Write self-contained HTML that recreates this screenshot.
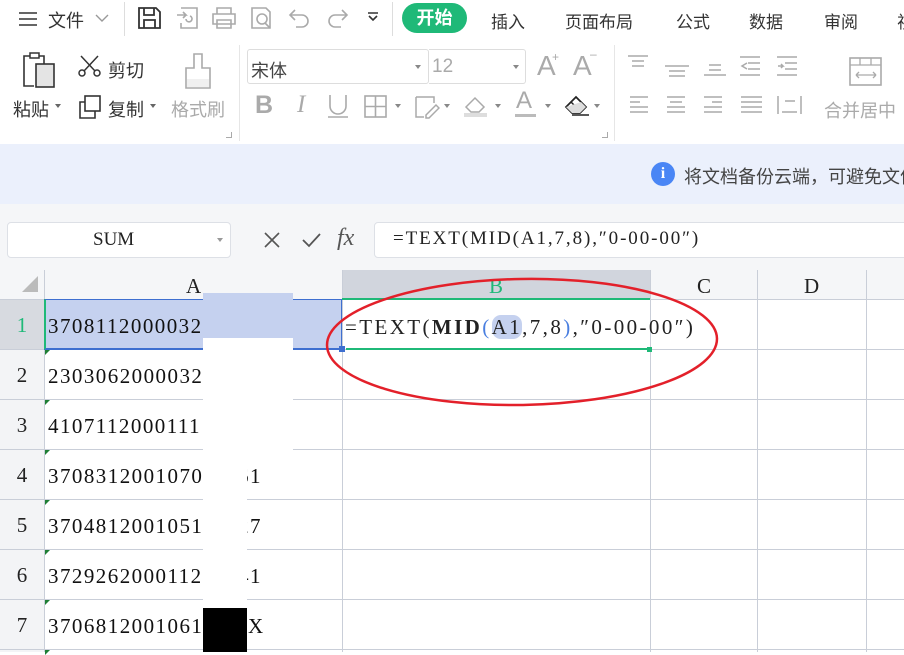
<!DOCTYPE html>
<html><head><meta charset="utf-8"><style>
*{margin:0;padding:0;box-sizing:border-box}
body{width:904px;height:652px;overflow:hidden;background:#fff;position:relative;font-family:"Liberation Sans","Noto Sans CJK SC",sans-serif;color:#222}
.a{position:absolute}
.t{font-size:17px;color:#333;white-space:nowrap}
.g{color:#aaa}
.serif{font-family:"Liberation Serif","Noto Serif CJK SC",serif}
.hl{position:absolute;left:0;width:904px;height:1px;background:#c9ced8}
.vl{position:absolute;top:270px;width:1px;height:382px;background:#c9ced8}
.cell{position:absolute;left:48px;font-family:"Liberation Serif",serif;font-size:21px;color:#111;letter-spacing:1.45px;white-space:nowrap}
.rn{position:absolute;left:0;width:44px;text-align:center;font-family:"Liberation Serif",serif;font-size:21px;color:#222}
.tri{position:absolute;left:45px;width:0;height:0;border-top:5px solid #1e7e34;border-right:5px solid transparent}
svg{position:absolute}
</style></head><body>
<!-- top bar -->
<svg style="left:18px;top:11px" width="22" height="16"><path d="M1 2h18M1 8h18M1 14h18" stroke="#333" stroke-width="1.6"/></svg>
<div class="a t" style="left:48px;top:7px;font-size:18px">文件</div>
<svg style="left:95px;top:14px" width="14" height="9"><path d="M1 1l6 6 6-6" stroke="#999" fill="none" stroke-width="1.4"/></svg>
<div class="a" style="left:124px;top:2px;width:1px;height:34px;background:#ddd"></div>
<svg style="left:137px;top:6px" width="26" height="24"><path d="M2 2h17l4 4v16H2z M7 2v7h10V2 M7 22v-8h11v8" stroke="#333" fill="none" stroke-width="1.8"/></svg>
<svg style="left:175px;top:6px" width="26" height="24"><path d="M6 2h16v20H6v-5 M2 9h9l-3-3m3 3l-3 3 M11 13a3 3 0 1 0 4 -3" stroke="#aaa" fill="none" stroke-width="1.6"/></svg>
<svg style="left:211px;top:6px" width="26" height="24"><path d="M6 8V2h14v6 M2 8h22v10H2z M6 14h14v8H6z" stroke="#aaa" fill="none" stroke-width="1.6"/></svg>
<svg style="left:250px;top:6px" width="26" height="24"><path d="M2 2h14l4 4v16H2z" stroke="#aaa" fill="none" stroke-width="1.6"/><circle cx="12" cy="13" r="5" stroke="#aaa" fill="none" stroke-width="1.6"/><path d="M15 17l5 5" stroke="#aaa" stroke-width="1.6"/></svg>
<svg style="left:286px;top:6px" width="26" height="24"><path d="M5 9h11a6 6 0 0 1 0 12h-6 M9 4L4 9l5 5" stroke="#aaa" fill="none" stroke-width="1.6"/></svg>
<svg style="left:325px;top:6px" width="26" height="24"><path d="M21 9H10a6 6 0 0 0 0 12h6 M17 4l5 5-5 5" stroke="#aaa" fill="none" stroke-width="1.6"/></svg>
<svg style="left:367px;top:12px" width="12" height="12"><path d="M1 1h10 M2 4l4 4 4-4" stroke="#333" fill="none" stroke-width="1.6"/></svg>
<div class="a" style="left:392px;top:2px;width:1px;height:34px;background:#ddd"></div>
<div class="a" style="left:402px;top:3px;width:65px;height:30px;background:#1fb978;border-radius:15px;color:#fff;font-size:18px;font-weight:bold;text-align:center;line-height:30px">开始</div>
<div class="a t" style="left:491px;top:8px">插入</div>
<div class="a t" style="left:565px;top:8px">页面布局</div>
<div class="a t" style="left:676px;top:8px">公式</div>
<div class="a t" style="left:749px;top:8px">数据</div>
<div class="a t" style="left:824px;top:8px">审阅</div>
<div class="a t" style="left:897px;top:8px">视</div>
<!-- ribbon -->
<svg style="left:21px;top:52px" width="36" height="38"><path d="M10 4h-7v30h10 M16 4h7v8" stroke="#333" fill="none" stroke-width="1.6"/><rect x="9" y="1" width="9" height="5" stroke="#333" fill="#fff" stroke-width="1.5"/><rect x="15" y="12" width="18" height="23" stroke="#333" fill="#e4e4e4" stroke-width="1.6"/></svg>
<div class="a t" style="left:13px;top:96px;font-size:18px">粘贴</div><div class="a" style="left:55px;top:104px;border:3px solid transparent;border-top:4px solid #666"></div>
<svg style="left:78px;top:54px" width="24" height="24"><circle cx="4" cy="19" r="3" stroke="#333" fill="none" stroke-width="1.5"/><circle cx="19" cy="19" r="3" stroke="#333" fill="none" stroke-width="1.5"/><path d="M6 17L20 2 M17 17L3 2" stroke="#333" stroke-width="1.5"/></svg>
<div class="a t" style="left:108px;top:57px;font-size:18px">剪切</div>
<svg style="left:78px;top:94px" width="24" height="26"><rect x="7" y="2" width="15" height="15" stroke="#333" fill="#fff" stroke-width="1.6"/><path d="M7 8H2v16h15v-7" stroke="#333" fill="none" stroke-width="1.6"/></svg>
<div class="a t" style="left:108px;top:96px;font-size:18px">复制</div><div class="a" style="left:150px;top:104px;border:3px solid transparent;border-top:4px solid #666"></div>
<svg style="left:183px;top:52px" width="30" height="38"><path d="M11 2h8v14h8v20H3V16h8z" stroke="#aaa" fill="none" stroke-width="1.6"/><rect x="4" y="27" width="22" height="8" fill="#f0f0f0"/></svg>
<div class="a t g" style="left:171px;top:96px;font-size:18px">格式刷</div>
<div class="a" style="left:226px;top:132px;width:6px;height:6px;border-right:1px solid #aaa;border-bottom:1px solid #aaa"></div>
<div class="a" style="left:239px;top:45px;width:1px;height:96px;background:#e6e6e6"></div>
<div class="a" style="left:247px;top:49px;width:182px;height:35px;border:1px solid #ddd;border-radius:3px"></div>
<div class="a t" style="left:251px;top:57px;color:#444;font-size:18px">宋体</div>
<div class="a" style="left:415px;top:65px;border:3px solid transparent;border-top:4px solid #888"></div>
<div class="a" style="left:429px;top:49px;width:97px;height:35px;border:1px solid #ddd;border-left:none;border-radius:0 3px 3px 0"></div>
<div class="a t g" style="left:432px;top:56px;font-size:19px">12</div>
<div class="a" style="left:513px;top:65px;border:3px solid transparent;border-top:4px solid #888"></div>
<div class="a g" style="left:537px;top:50px;font-size:28px;color:#aaa">A</div><div class="a" style="left:552px;top:50px;font-size:12px;color:#aaa">+</div>
<div class="a g" style="left:573px;top:50px;font-size:28px;color:#aaa">A</div><div class="a" style="left:590px;top:47px;font-size:12px;color:#aaa">–</div>
<div class="a" style="left:255px;top:91px;font-size:25px;font-weight:bold;color:#aaa">B</div>
<div class="a serif" style="left:297px;top:91px;font-size:25px;font-style:italic;color:#aaa">I</div>
<svg style="left:326px;top:94px" width="24" height="24"><path d="M4 1v11a8 8 0 0 0 16 0V1 M2 23h20" stroke="#aaa" fill="none" stroke-width="1.6"/></svg>
<svg style="left:364px;top:95px" width="24" height="24"><rect x="1" y="1" width="21" height="21" stroke="#aaa" fill="none" stroke-width="1.6"/><path d="M11.5 1v21M1 11.5h21" stroke="#aaa" stroke-width="1.6"/></svg>
<div class="a" style="left:395px;top:104px;border:3px solid transparent;border-top:4px solid #888"></div>
<svg style="left:414px;top:95px" width="26" height="24"><path d="M2 2h18v6 M2 2v20h8" stroke="#aaa" fill="none" stroke-width="1.5"/><path d="M12 20l10-10 3 3-10 10h-3z" stroke="#aaa" fill="none" stroke-width="1.5"/></svg>
<div class="a" style="left:444px;top:104px;border:3px solid transparent;border-top:4px solid #888"></div>
<svg style="left:463px;top:94px" width="26" height="24"><path d="M3 13l9-9 9 9-5 5H8z" stroke="#aaa" fill="none" stroke-width="1.5"/><rect x="1" y="19" width="23" height="4" fill="#ddd"/></svg>
<div class="a" style="left:495px;top:104px;border:3px solid transparent;border-top:4px solid #888"></div>
<div class="a" style="left:516px;top:87px;font-size:24px;color:#aaa">A</div><div class="a" style="left:515px;top:114px;width:21px;height:3px;background:#bbb"></div>
<div class="a" style="left:545px;top:104px;border:3px solid transparent;border-top:4px solid #888"></div>
<svg style="left:563px;top:93px" width="30" height="24"><path d="M3 14l10-10 10 10-6 6H9z" stroke="#222" fill="none" stroke-width="1.7"/><path d="M8 9l10 10" stroke="#222" stroke-width="1.5"/><path d="M3 14l6 6h8l6-6-5-5z" fill="#ddd"/><path d="M9 22h17" stroke="#222" stroke-width="1.5"/></svg>
<div class="a" style="left:594px;top:104px;border:3px solid transparent;border-top:4px solid #888"></div>
<div class="a" style="left:602px;top:132px;width:6px;height:6px;border-right:1px solid #aaa;border-bottom:1px solid #aaa"></div>
<div class="a" style="left:614px;top:45px;width:1px;height:96px;background:#e6e6e6"></div>
<svg style="left:626px;top:54px" width="180" height="62" stroke="#aaa" stroke-width="1.5" fill="none">
<path d="M2 2h20M6 7h12M6 12h12"/>
<path d="M39 12h24M43 17h16M43 22h16"/>
<path d="M78 21h22M83 16h12M83 11h12"/>
<path d="M114 3h20M122 9h12M122 15h12M114 21h20M121 9l-5 3 5 3"/>
<path d="M151 3h20M159 9h12M159 15h12M151 21h20M152 12h5l-2-2m2 2l-2 2"/>
<path d="M4 43h18M4 48h10M4 53h18M4 58h18"/>
<path d="M41 43h18M44 48h12M41 53h18M41 58h18"/>
<path d="M78 43h18M86 48h10M78 53h18M78 58h18"/>
<path d="M115 43h21M115 48h21M115 53h21M115 58h21"/>
<path d="M152 42v18M175 42v18M156 58h15M159 47h10"/>
</svg>
<svg style="left:849px;top:57px" width="34" height="30"><rect x="1" y="1" width="31" height="27" stroke="#aaa" fill="none" stroke-width="1.6"/><path d="M1 8h31M11 1v7M22 1v7M7 18h20M7 18l3-3m-3 3l3 3M27 18l-3-3m3 3l-3 3" stroke="#aaa" fill="none" stroke-width="1.3"/></svg>
<div class="a t g" style="left:824px;top:97px;color:#aaa;font-size:18px">合并居中</div>
<!-- notification band -->
<div class="a" style="left:0;top:144px;width:904px;height:60px;background:#ebf0fc"></div>
<div class="a" style="left:651px;top:162px;width:24px;height:24px;border-radius:50%;background:#4a86f5;color:#fff;font-size:16px;font-weight:bold;text-align:center;line-height:24px;font-family:'Liberation Serif',serif">i</div>
<div class="a t" style="left:684px;top:163px;color:#444;font-size:18px">将文档备份云端，可避免文件</div>
<!-- formula bar -->
<div class="a" style="left:0;top:204px;width:904px;height:66px;background:#f5f6f8"></div>
<div class="a" style="left:7px;top:222px;width:224px;height:36px;background:#fff;border:1px solid #dde0e6;border-radius:4px"></div>
<div class="a serif" style="left:93px;top:229px;font-size:19px">SUM</div>
<div class="a" style="left:217px;top:238px;border:3px solid transparent;border-top:4px solid #999"></div>
<svg style="left:263px;top:231px" width="18" height="18"><path d="M2 2l14 14M16 2L2 16" stroke="#555" stroke-width="1.6"/></svg>
<svg style="left:301px;top:232px" width="20" height="16"><path d="M2 8l6 6L19 2" stroke="#555" fill="none" stroke-width="1.8"/></svg>
<div class="a serif" style="left:337px;top:225px;font-size:24px;font-style:italic;color:#555">fx</div>
<div class="a" style="left:374px;top:222px;width:540px;height:36px;background:#fff;border:1px solid #dde0e6;border-radius:4px"></div>
<div class="a serif" style="left:393px;top:228px;font-size:19px;white-space:nowrap;letter-spacing:1.9px">=TEXT(MID(A1,7,8),″0-00-00″)</div>
<!-- grid -->
<div class="a" style="left:0;top:270px;width:44px;height:382px;background:#f3f4f6"></div>
<div class="a" style="left:0;top:300px;width:44px;height:50px;background:#d7dae0"></div>
<div class="a" style="left:0;top:270px;width:904px;height:30px;background:#f5f6f8"></div>
<div class="a" style="left:342px;top:270px;width:308px;height:30px;background:#d1d5dd"></div>
<div class="a" style="left:22px;top:276px;width:0;height:0;border-left:16px solid transparent;border-bottom:16px solid #bbb"></div>
<div class="hl" style="top:299px"></div><div class="hl" style="top:349px"></div><div class="hl" style="top:399px"></div><div class="hl" style="top:449px"></div><div class="hl" style="top:499px"></div><div class="hl" style="top:549px"></div><div class="hl" style="top:599px"></div><div class="hl" style="top:649px"></div>
<div class="vl" style="left:44px"></div><div class="vl" style="left:342px"></div><div class="vl" style="left:650px"></div><div class="vl" style="left:757px"></div><div class="vl" style="left:866px"></div>
<div class="a serif" style="left:186px;top:274px;font-size:21px">A</div>
<div class="a serif" style="left:489px;top:274px;font-size:21px;color:#1fb978">B</div>
<div class="a serif" style="left:697px;top:274px;font-size:21px">C</div>
<div class="a serif" style="left:804px;top:274px;font-size:21px">D</div>
<!-- row1 selection -->
<div class="a" style="left:44px;top:299px;width:298px;height:51px;background:#c5d1ef;border:1px solid #3e6fd0;border-bottom:2px solid #3e6fd0;border-left:2px solid #1fb978"></div>
<div class="a" style="left:342px;top:298px;width:308px;height:2px;background:#1fb978"></div>
<div class="a" style="left:346px;top:348px;width:304px;height:2px;background:#1fb978"></div>
<div class="a" style="left:339px;top:346px;width:6px;height:6px;background:#3e6fd0"></div>
<div class="a" style="left:647px;top:347px;width:5px;height:5px;background:#1fb978"></div>
<div class="rn" style="top:313px;color:#1fb978">1</div>
<div class="rn" style="top:363px">2</div><div class="rn" style="top:413px">3</div><div class="rn" style="top:463px">4</div><div class="rn" style="top:513px">5</div><div class="rn" style="top:563px">6</div><div class="rn" style="top:613px">7</div>
<div class="cell" style="top:314px">3708112000032</div>
<div class="cell" style="top:364px">2303062000032</div>
<div class="cell" style="top:414px">4107112000111</div>
<div class="cell" style="top:464px">3708312001070</div>
<div class="cell" style="top:514px">3704812001051</div>
<div class="cell" style="top:564px">3729262000112</div>
<div class="cell" style="top:614px">3706812001061</div>
<div class="cell" style="top:464px;left:238px">61</div>
<div class="cell" style="top:514px;left:238px">27</div>
<div class="cell" style="top:564px;left:238px">41</div>
<div class="cell" style="top:614px;left:236px">1X</div>
<div class="tri" style="top:350px"></div><div class="tri" style="top:400px"></div><div class="tri" style="top:450px"></div><div class="tri" style="top:500px"></div><div class="tri" style="top:550px"></div><div class="tri" style="top:600px"></div><div class="tri" style="top:650px"></div>
<!-- redaction patches -->
<div class="a" style="left:203px;top:293px;width:90px;height:45px;background:#c5d1ef"></div>
<div class="a" style="left:203px;top:338px;width:90px;height:112px;background:#fff"></div>
<div class="a" style="left:203px;top:450px;width:44px;height:158px;background:#fff"></div>
<div class="a" style="left:203px;top:608px;width:44px;height:44px;background:#000"></div>
<!-- formula in B1 -->
<div class="a serif" style="left:345px;top:315px;font-size:21px;white-space:nowrap;letter-spacing:2.4px">=TEXT(<b>MID</b><span style="color:#4a7fe0">(</span><span style="background:#c5d1ef;border-radius:9px">A1</span>,7,8<span style="color:#4a7fe0">)</span>,″0-00-00″)</div>
<!-- red ellipse -->
<svg style="left:320px;top:270px" width="410" height="145"><ellipse cx="202" cy="72" rx="195" ry="63" stroke="#e3202a" stroke-width="2.5" fill="none" transform="rotate(-1 200 72)"/></svg>
</body></html>
